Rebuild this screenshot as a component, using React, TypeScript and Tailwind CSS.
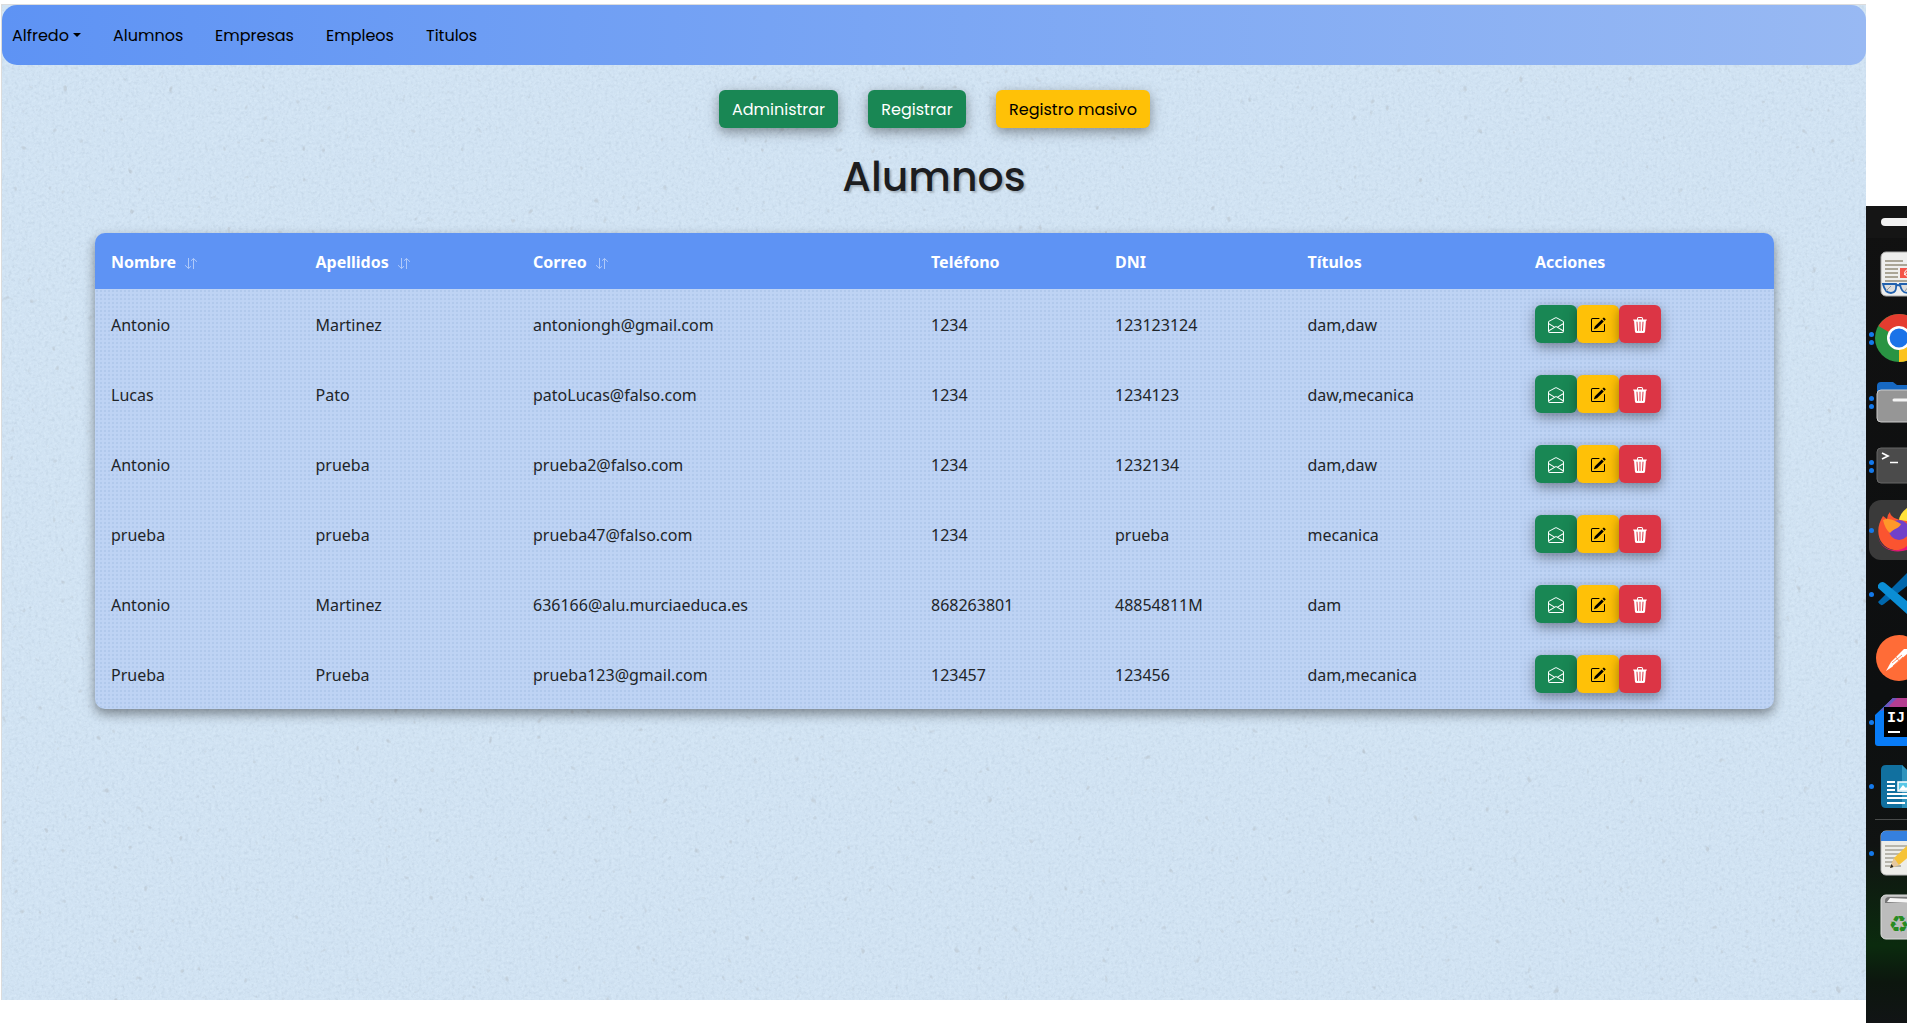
import React from "react";
import { BsEnvelopeOpen, BsPencilSquare, BsTrash3Fill } from "react-icons/bs";
import { clsx } from "clsx";

const columns: { label: string; sortable?: boolean }[] = [
  { label: "Nombre", sortable: true },
  { label: "Apellidos", sortable: true },
  { label: "Correo", sortable: true },
  { label: "Teléfono" },
  { label: "DNI" },
  { label: "Títulos" },
  { label: "Acciones" },
];

const students = [
  ["Antonio", "Martinez", "antoniongh@gmail.com", "1234", "123123124", "dam,daw"],
  ["Lucas", "Pato", "patoLucas@falso.com", "1234", "1234123", "daw,mecanica"],
  ["Antonio", "prueba", "prueba2@falso.com", "1234", "1232134", "dam,daw"],
  ["prueba", "prueba", "prueba47@falso.com", "1234", "prueba", "mecanica"],
  ["Antonio", "Martinez", "636166@alu.murciaeduca.es", "868263801", "48854811M", "dam"],
  ["Prueba", "Prueba", "prueba123@gmail.com", "123457", "123456", "dam,mecanica"],
];

const gridCols = "grid grid-cols-[204.500px_217.500px_398px_184px_192.500px_227.500px_255px]";
const geo = "font-['Poppins','Inter',sans-serif] [font-feature-settings:'cv11']";
const lift = "shadow-[0_4px_8px_rgba(0,0,0,0.2),0_4px_16px_rgba(0,0,0,0.22)]";

function PaperTexture() {
  return (
    <svg className="pointer-events-none absolute inset-0 h-full w-full" aria-hidden="true">
      <defs>
        <filter id="grain-dark" x="0" y="0" width="100%" height="100%" colorInterpolationFilters="sRGB">
          <feTurbulence type="fractalNoise" baseFrequency="0.3" numOctaves="3" seed="4" />
          <feColorMatrix values="0 0 0 0 0.55  0 0 0 0 0.62  0 0 0 0 0.7  1.1 0 0 0 -0.5" />
        </filter>
        <filter id="grain-light" x="0" y="0" width="100%" height="100%" colorInterpolationFilters="sRGB">
          <feTurbulence type="fractalNoise" baseFrequency="0.4" numOctaves="2" seed="11" />
          <feColorMatrix values="0 0 0 0 0.9  0 0 0 0 0.96  0 0 0 0 1  0 2 0 0 -0.9" />
        </filter>
        <filter id="specks" x="0" y="0" width="100%" height="100%" colorInterpolationFilters="sRGB">
          <feTurbulence type="fractalNoise" baseFrequency="0.12 0.1" numOctaves="2" seed="23" />
          <feColorMatrix values="0 0 0 0 0.6  0 0 0 0 0.6  0 0 0 0 0.6  8 0 0 0 -6" />
        </filter>
      </defs>
      <rect width="100%" height="100%" filter="url(#grain-dark)" opacity="0.35" />
      <rect width="100%" height="100%" filter="url(#grain-light)" opacity="0.4" />
      <rect width="100%" height="100%" filter="url(#specks)" opacity="0.25" />
    </svg>
  );
}

function Navbar() {
  return (
    <nav
      className={clsx(
        "flex h-[60px] items-center rounded-[15px] bg-linear-to-r from-[#5e93f4] to-[#98b9f3] pt-0.5 pl-2.5 text-[16px] text-black",
        geo
      )}
    >
      <a className="flex w-[101px] items-center">
        <span>Alfredo</span>
        <span className="mt-[-3px] ml-[4px] h-0 w-0 border-x-[4.5px] border-t-[4.5px] border-x-transparent border-t-black" />
      </a>
      <a className="w-[102px]">Alumnos</a>
      <a className="w-[111px]">Empresas</a>
      <a className="w-[100px]">Empleos</a>
      <a>Titulos</a>
    </nav>
  );
}

function Toolbar() {
  const base = "flex h-[38px] items-center justify-center rounded-md pt-0.5 text-[16px]";
  return (
    <div className={clsx("mt-[25px] ml-[717px] flex gap-[30px]", geo)}>
      <button className={clsx(base, lift, "w-[119px] bg-[#198754] text-white")}>Administrar</button>
      <button className={clsx(base, lift, "w-[98px] bg-[#198754] text-white")}>Registrar</button>
      <button className={clsx(base, lift, "w-[154px] bg-[#ffc107] text-black")}>Registro masivo</button>
    </div>
  );
}

function SortIcon() {
  return (
    <svg className="mt-0.5 ml-[8px] h-[13px] w-[14px] opacity-50" viewBox="0 0 14 13" fill="none" stroke="white">
      <path d="M4.500 1v10.500M1 8.200l3.500 3.300L7 9.200M9.500 12V1.500M7 3.800l2.500-2.300L13 4.800" />
    </svg>
  );
}

function Actions() {
  const base = "flex h-[38px] w-[42px] items-center justify-center rounded-md pt-0.5";
  return (
    <div className="flex">
      <button className={clsx(base, lift, "bg-[#198754] text-white")}>
        <BsEnvelopeOpen size={16} />
      </button>
      <button className={clsx(base, lift, "bg-[#ffc107] text-black")}>
        <BsPencilSquare size={16} />
      </button>
      <button className={clsx(base, lift, "bg-[#dc3545] text-white")}>
        <BsTrash3Fill size={16} />
      </button>
    </div>
  );
}

function StudentsTable() {
  return (
    <section className="mt-[32px] ml-[92.500px] w-[1679px] overflow-hidden rounded-[10px] bg-[#bed3f4] font-['Noto_Sans',sans-serif] text-[16px] shadow-[0_5px_12px_rgba(0,0,0,0.42)]">
      <header className={clsx(gridCols, "h-14 items-center bg-[#5e93f4] font-bold text-white")}>
        {columns.map((c) => (
          <div key={c.label} className="flex items-center pt-0.5 pl-[16.500px]">
            {c.label}
            {c.sortable && <SortIcon />}
          </div>
        ))}
      </header>
      <div className="bg-[radial-gradient(circle_at_center,rgba(125,160,205,0.2)_0.8px,transparent_1.6px)] bg-size-[4px_4px]">
        {students.map((row, i) => (
          <div key={i} className={clsx(gridCols, "h-[70px] items-center text-[#212529]")}>
            {row.map((cell, j) => (
              <div key={j} className="pt-0.5 pl-[16.500px]">
                {cell}
              </div>
            ))}
            <div className="pl-[16.500px]">
              <Actions />
            </div>
          </div>
        ))}
      </div>
    </section>
  );
}

function DockItem({ dots = 0, active, children }: { dots?: number; active?: boolean; children: React.ReactNode }) {
  return (
    <div className={clsx("flex h-[60px] items-center overflow-hidden rounded-l-xl", active && "bg-[#3a3a3a]")}>
      <div className="flex w-[6px] shrink-0 flex-col gap-[3px]">
        {Array.from({ length: dots }, (_, i) => (
          <span key={i} className="h-[5px] w-[5px] rounded-full bg-[#1479ea]" />
        ))}
      </div>
      <svg className="h-[52px] w-[32px] shrink-0" viewBox="0 0 32 52">
        {children}
      </svg>
    </div>
  );
}

function Dock() {
  return (
    <aside className="mt-[206px] h-[817px] w-[41px] shrink-0 overflow-hidden bg-[linear-gradient(180deg,#111_0%,#0d0f10_60%,#101312_78%,#0b2b0e_90.5%,#0c160e_95%,#111415_100%)]">
      <div className="h-8 bg-[#151515] pt-3 pl-[15px]">
        <div className="h-2 w-[34px] rounded-l-full bg-[#f2f2f2]" />
      </div>
      <div className="flex flex-col gap-1 pt-1.5 pl-[3px]">
        <DockItem>
          <rect x="6" y="4" width="40" height="44" rx="5" fill="#eeeeed" stroke="#aaa" />
          <path d="M10 13h18M10 17h25M10 21h13M10 25h13M10 29h13M10 33h25" stroke="#aaa596" strokeWidth="1.8" />
          <rect x="25" y="20" width="12" height="10" fill="#f45448" />
          <path d="M35 22a3.500 3.500 0 1 0 0 6M29 27l5-4" fill="none" stroke="#fff" />
          <path d="M8 36h13q1 9-5 9t-8-9zM21 38q2-2 4 0M25 36h14q1 9-6 9t-8-9z" fill="#ddd" stroke="#2161ae" strokeWidth="1.8" />
          <path d="m11 43 5-5m14 5 4-5" stroke="#999" />
        </DockItem>
        <DockItem dots={2}>
          <circle cx="24" cy="26" r="24" fill="#299443" />
          <path d="M24 26 3.500 14A24 24 0 0 1 45 14z" fill="#e43c2f" />
          <path d="M24 26h24a24 24 0 0 1-24 24z" fill="#fcc31e" />
          <circle cx="24" cy="26" r="12" fill="#fff" />
          <circle cx="24" cy="26" r="9.400" fill="#1a73e8" />
        </DockItem>
        <DockItem dots={2}>
          <path d="M2 17V10q0-4 4-4h12l4 3h12v15H2z" fill="#1668c2" />
          <rect x="2" y="14" width="46" height="32" rx="4" fill="#969696" stroke="#ccc" />
          <path d="M19 24h15" stroke="#f4f4f4" strokeWidth="3" strokeLinecap="round" />
        </DockItem>
        <DockItem dots={2}>
          <rect x="2" y="8" width="46" height="35" rx="4" fill="#4b4b4b" stroke="#666" />
          <path d="m7 13 6 3-6 3M15 22.500h8" fill="none" stroke="#fff" strokeWidth="1.700" />
        </DockItem>
        <DockItem dots={1} active>
          <path d="M32 4q-8 6-8 13L32 26z" fill="#ffe23a" />
          <path d="M32 17C20 16 15 12 15 8q-3 3-3 7L8 12C-1 26 3 43 19 46q7 2 13-1z" fill="#fb5430" />
          <path d="M3 33c3 12 18 18 29 9v4C20 50 6 46 3 33z" fill="#e91578" />
          <circle cx="24" cy="26" r="10" fill="#7141c9" />
          <path d="M8 16c6-3 13 1 18 4-2 5-7 4-11 9q-5-4-7-13z" fill="#ff9829" />
        </DockItem>
        <DockItem dots={1}>
          <path d="M3 34 32 5v13L9 36q-3 3-6-2z" fill="#0067ac" />
          <path d="M3 17q3-5 7-2l22 18v13L3 20z" fill="#0b8ed5" />
        </DockItem>
        <DockItem>
          <circle cx="24" cy="26" r="23" fill="#ff6c37" />
          <path d="M11 39 16 30 29 17h3v5L17 35z" fill="#fff" />
          <path d="m17 31 10-8m-9 11 10-9m-8-1 5 6" stroke="#ff6c37" strokeWidth="0.8" />
        </DockItem>
        <DockItem dots={1}>
          <path d="M0 19 18 2h14v48H3q-3 0-3-3z" fill="#087cf8" />
          <path d="M10 10 18 2h14v12z" fill="#b53e91" />
          <path d="M5 15 18 2h4L10 14z" fill="#6c57bd" />
          <rect x="9" y="11" width="25" height="30" fill="#000" />
          <text x="12" y="26" fill="#fff" fontSize="15" fontWeight="bold" className="font-['Liberation_Mono',monospace]">IJ</text>
          <path d="M13 36h12" stroke="#fff" strokeWidth="2" />
        </DockItem>
        <DockItem dots={1}>
          <path d="M6 10q0-5 5-5h16l10 10v33H11q-5 0-5-5z" fill="#11709f" />
          <path d="M27 5v43h10V15z" fill="#2f93bc" />
          <path d="M12 22h8m-8 4h8m-8 4h8m-8 4h25m-25 4h25m-25 5h18" stroke="#fff" strokeWidth="2" />
          <path d="M23 22h14v9H23z" fill="#58c7e7" stroke="#fff" strokeWidth="1.500" />
          <path d="m24 30 4-5 3 3 4-4v6z" fill="#fff" />
        </DockItem>
      </div>
      <div className="mt-[3px] ml-[9px] h-px bg-[#4a4c4b]" />
      <div className="mt-[3px] flex flex-col gap-1 pl-[3px]">
        <DockItem dots={1}>
          <rect x="6" y="4" width="44" height="44" rx="5" fill="#edede9" stroke="#bbb" />
          <path d="M6 14V9q0-5 5-5h30v10z" fill="#3580df" />
          <path d="M10 19h25m-25 4h22m-22 4h18m-18 4h14m-14 4h8m-8 4h16" stroke="#b8b6ac" strokeWidth="1.800" />
          <path d="m15 41 4-10 19-18v13L24 38z" fill="#f6c338" />
          <path d="m15 41 4-10 5 7z" fill="#e5c8a0" />
          <path d="m15 41 1.500-4 2 3z" fill="#222" />
        </DockItem>
        <DockItem>
          <rect x="6" y="4" width="44" height="44" rx="5" fill="#bcbcbc" stroke="#ddd" />
          <path d="M10 10q0-4 4-4h25v6H10z" fill="#777" />
          <path d="m12 11 3-4 22 1v4z" fill="#f6f6f6" />
          <text x="13.500" y="41" fill="#278b22" fontSize="23" className="font-['DejaVu_Sans',sans-serif]">♻</text>
        </DockItem>
      </div>
    </aside>
  );
}

export default function App() {
  return (
    <div className="flex h-[1023px] w-[1907px] overflow-hidden bg-white">
      <main className="mt-1 ml-px h-[996px] w-[1865px] shrink-0 border-t border-l border-[#dcdcdc] bg-[#d1e3f3]">
        <div className="relative h-full">
          <PaperTexture />
          <div className="relative">
            <Navbar />
            <Toolbar />
            <h1
              className={clsx(
                "mt-[25px] h-[48px] text-center text-[41px] leading-[48px] font-medium text-[#1c1d1f] [text-shadow:2px_2px_2px_rgba(0,0,0,0.22)]",
                geo
              )}
            >
              Alumnos
            </h1>
            <StudentsTable />
          </div>
        </div>
      </main>
      <Dock />
    </div>
  );
}
